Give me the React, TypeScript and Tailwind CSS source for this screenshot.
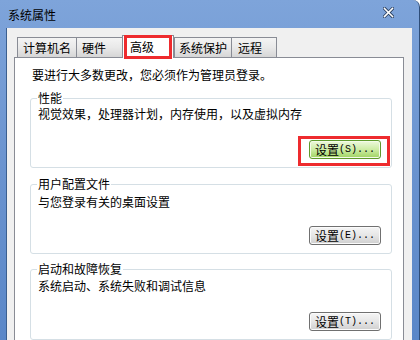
import React from 'react';

const cjk = "font-['Noto_Sans_CJK_SC',sans-serif]";

const tabs = [
  { label: '计算机名', cls: 'w-[59px] pl-[5px]' },
  { label: '硬件', cls: 'w-[46px] pl-[5px]' },
  { label: '高级', cls: 'w-[52px] pl-[7px]', active: true },
  { label: '系统保护', cls: 'w-[57px] pl-[4px]' },
  { label: '远程', cls: 'w-[46px] pl-[6px] border-r' },
];

const groups = [
  {
    title: '性能',
    desc: '视觉效果，处理器计划，内存使用，以及虚拟内存',
    key: 'S',
    box: 'mt-[7px]',
    descCls: 'mt-0',
    btnCls: 'mt-[18px]',
    hot: true,
  },
  {
    title: '用户配置文件',
    desc: '与您登录有关的桌面设置',
    key: 'E',
    box: 'mt-[8px]',
    descCls: 'mt-[2px]',
    btnCls: 'mt-[16px]',
  },
  {
    title: '启动和故障恢复',
    desc: '系统启动、系统失败和调试信息',
    key: 'T',
    box: 'mt-[7px]',
    descCls: 'mt-[1px]',
    btnCls: 'mt-[18px]',
  },
];

const SettingsButton: React.FC<{ k: string; hot?: boolean }> = ({ k, hot }) => (
  <div className="relative">
    <button
      className={
        hot
          ? 'w-[72px] h-[19px] flex items-center justify-center rounded-[3px] border border-[#5f9a2c] bg-linear-to-b from-[#eef9dd] via-[#cdeca4] to-[#9fd35f] shadow-[inset_0_0_0_1px_#f4fbe9] text-black'
          : 'w-[72px] h-[19px] flex items-center justify-center rounded-[3px] border border-[#707070] bg-linear-to-b from-[#f5f5f5] via-[#e6e6e6] to-[#cfcfcf] shadow-[inset_0_0_0_1px_#fbfbfb] text-black'
      }
    >
      <span className="text-[12px] leading-[14px]">设置</span>
      <span className="font-['Liberation_Mono',monospace] text-[10px] leading-[14px]">({k})...</span>
    </button>
    {hot && (
      <div className="absolute -left-[11px] -right-[9px] -top-[4px] -bottom-[7px] border-[3px] border-[#ee2b2e] pointer-events-none" />
    )}
  </div>
);

export default function App() {
  return (
    <div className={`w-[420px] h-[340px] overflow-hidden bg-white text-black ${cjk}`}>
      <div className="h-[340px] flex flex-col rounded-tr-[7px] border-r border-[#2e4d78] bg-linear-to-b from-[#7ea4da] via-[#6a93cf] to-[#5a87c8]">
        {/* title bar */}
        <div className="h-[28px] flex items-center justify-between pl-[8px] pr-[25px] shrink-0">
          <span className="text-[12px] leading-[16px] mt-[1px]">系统属性</span>
          <svg width="11" height="11" viewBox="0 0 11 11" className="-mt-[4px]">
            <path d="M1.5 1.5 L9.5 9.5 M9.5 1.5 L1.5 9.5" stroke="#2a3f5e" strokeWidth="3.2" strokeLinecap="square" />
            <path d="M1.5 1.5 L9.5 9.5 M9.5 1.5 L1.5 9.5" stroke="#ffffff" strokeWidth="1.6" strokeLinecap="square" />
          </svg>
        </div>

        {/* client area */}
        <div className="flex-1 ml-[6px] mr-[7px] border-l border-[#3b5f8f] bg-[#f0f0f0] pt-[7px] pl-[7px] pr-[8px] flex flex-col min-h-0">
          <div className="flex items-end h-[22px] pl-[3px] shrink-0">
            {tabs.map((t) =>
              t.active ? (
                <div
                  key={t.label}
                  className={`relative z-10 h-[23px] -mb-[1px] border-l border-t border-r border-[#898c95] bg-white text-[12px] leading-[20px] pt-[1px] ${t.cls}`}
                >
                  {t.label}
                  <div className="absolute left-[1px] right-[1px] -top-[1px] -bottom-[1px] border-[3px] border-[#ee2b2e]" />
                </div>
              ) : (
                <div
                  key={t.label}
                  className={`h-[20px] border-l border-t border-[#898c95] bg-linear-to-b from-[#f4f4f4] via-[#e9e9e9] to-[#d6d6d6] text-[12px] leading-[19px] ${t.cls}`}
                >
                  {t.label}
                </div>
              )
            )}
          </div>

          {/* tab page */}
          <div className="flex-1 border border-[#898c95] bg-white pt-[9px] pl-[15px] pr-[11px] flex flex-col">
            <p className="pl-[2px] text-[12px] leading-[16px]">要进行大多数更改，您必须作为管理员登录。</p>
            {groups.map((g) => (
              <fieldset
                key={g.title}
                className={`shrink-0 border border-[#d5dfe5] rounded-[3px] pl-[7px] pr-[10px] pb-[8px] ${g.box}`}
              >
                <legend className="-ml-[1px] px-[1px] text-[12px] leading-[16px]">{g.title}</legend>
                <p className={`text-[12px] leading-[16px] ${g.descCls}`}>{g.desc}</p>
                <div className={`flex justify-end ${g.btnCls}`}>
                  <SettingsButton k={g.key} hot={g.hot} />
                </div>
              </fieldset>
            ))}
          </div>
        </div>
      </div>
    </div>
  );
}
